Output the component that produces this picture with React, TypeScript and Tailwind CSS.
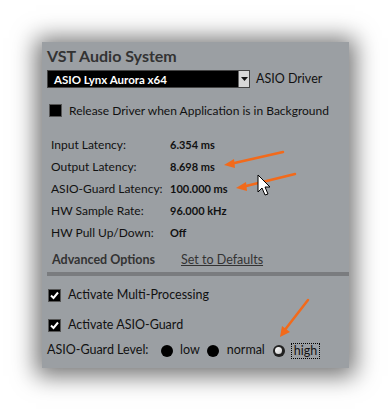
import React from 'react';

const rows = [
  { label: 'Input Latency:', value: '6.354 ms' },
  { label: 'Output Latency:', value: '8.698 ms' },
  { label: 'ASIO-Guard Latency:', value: '100.000 ms' },
  { label: 'HW Sample Rate:', value: '96.000 kHz' },
  { label: 'HW Pull Up/Down:', value: 'Off' },
];

function CheckBox({ checked }: { checked: boolean }) {
  return (
    <span className="w-[13px] h-[13px] bg-black border border-[#555] flex items-center justify-center shrink-0">
      {checked && (
        <svg width="11" height="11" viewBox="0 0 11 11">
          <path d="M2 5.5 L4.5 8 L9 2.5" stroke="white" strokeWidth="2" fill="none" />
        </svg>
      )}
    </span>
  );
}

function Radio({ on }: { on?: boolean }) {
  return on ? (
    <span className="w-[12px] h-[12px] rounded-full bg-[#222] flex items-center justify-center shrink-0">
      <span className="w-[7px] h-[7px] rounded-full bg-gradient-to-br from-white to-[#c8c8c8]" />
    </span>
  ) : (
    <span className="w-[12px] h-[12px] rounded-full bg-black shrink-0" />
  );
}

export default function App() {
  return (
    <div className="relative w-[391px] h-[411px] bg-white overflow-hidden pt-[42px] pl-[42px] whitespace-nowrap" style={{ fontFamily: 'Lato, "Open Sans", sans-serif' }}>
      <div className="w-[307px] h-[326px] bg-[#9b9fa3] shadow-[0_2px_22px_6px_rgba(0,0,0,0.55)] text-[#111] text-[12px]">
        <div className="pl-[5px] pt-[3px]">
          <div className="text-[16px] font-bold text-[#333] leading-[22px]">VST Audio System</div>
          <div className="flex items-center mt-[3px]">
            <div className="w-[203px] h-[18px] bg-black border border-[#444] flex items-center justify-between">
              <span className="pl-[6px] text-white font-bold text-[11.5px]">ASIO Lynx Aurora x64</span>
              <span className="w-[11px] h-[16px] bg-[#d8d8d8] border-l border-[#666] flex items-center justify-center">
                <svg width="7" height="4" viewBox="0 0 7 4"><path d="M0 0 H7 L3.5 4 Z" fill="#111" /></svg>
              </span>
            </div>
            <span className="ml-[6px] text-[12.5px]">ASIO Driver</span>
          </div>
          <div className="flex items-center gap-[7px] mt-[14px] pl-[2px] text-[12px] h-[16px]">
            <CheckBox checked={false} />
            <span>Release Driver when Application is in Background</span>
          </div>
          <div className="mt-[15px] pl-[4px] flex flex-col">
            {rows.map((r) => (
              <div key={r.label} className="flex items-center h-[22px]">
                <span className="w-[119px] text-[12px]">{r.label}</span>
                <span className="font-bold text-[11px]">{r.value}</span>
              </div>
            ))}
          </div>
          <div className="flex items-center mt-[9px] pl-[5px] h-[16px]">
            <span className="w-[129px] font-bold text-[12.5px] text-[#333]">Advanced Options</span>
            <span className="underline text-[12.5px] text-[#333]">Set to Defaults</span>
          </div>
        </div>
        <div className="ml-[5px] mt-[3px] h-[4px] bg-[#7a7c7f]" />
        <div className="pl-[6px] pt-[12px] text-[12.5px]">
          <div className="flex items-center gap-[7px] h-[16px]">
            <CheckBox checked />
            <span>Activate Multi-Processing</span>
          </div>
          <div className="flex items-center gap-[7px] h-[16px] mt-[14px]">
            <CheckBox checked />
            <span>Activate ASIO-Guard</span>
          </div>
          <div className="flex items-center h-[18px] mt-[8px] -ml-[1px]">
            <span className="w-[114px]">ASIO-Guard Level:</span>
            <Radio />
            <span className="ml-[7px] mr-[7px]">low</span>
            <Radio />
            <span className="ml-[8px] mr-[8px]">normal</span>
            <Radio on />
            <span className="ml-[6px] border border-dotted border-black px-[2px] leading-[14px]">high</span>
          </div>
        </div>
      </div>

      <svg className="absolute left-0 top-0 pointer-events-none" width="391" height="411">
        <g stroke="#f26a1b" strokeWidth="2.5" strokeLinecap="round" fill="#f26a1b">
          <line x1="283" y1="152" x2="230" y2="164" />
          <polygon points="224,165 234,159 235,168" stroke="none" />
          <line x1="295" y1="174" x2="242" y2="187" />
          <polygon points="236,188 246,182 247,191" stroke="none" />
          <line x1="308" y1="300" x2="284" y2="331" />
          <polygon points="280,337 282,326 290,332" stroke="none" />
        </g>
        <path
          d="M258 175 L258 192 L262 188 L265 195 L268 194 L265 187 L270 187 Z"
          fill="white"
          stroke="black"
          strokeWidth="1"
          strokeLinejoin="round"
        />
      </svg>
    </div>
  );
}
